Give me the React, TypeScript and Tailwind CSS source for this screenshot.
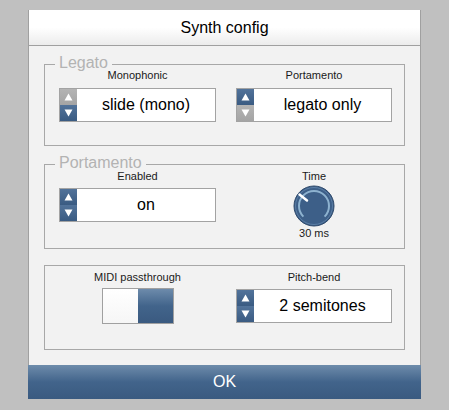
import type { ReactNode } from "react";

const font = { fontFamily: '"Liberation Sans", Arial, sans-serif' };

function Arrow({ dir, active }: { dir: "up" | "down"; active: boolean }) {
    return (
        <div
            className={
                "flex flex-1 items-center justify-center " +
                (active
                    ? "bg-gradient-to-b from-[#52739a] to-[#3a5b82]"
                    : "bg-gradient-to-b from-[#b4b4b4] to-[#a4a4a4]")
            }
        >
            <svg width="9" height="8" viewBox="0 0 9 8">
                {dir === "up" ? (
                    <polygon points="4.5,0.5 8.5,7.5 0.5,7.5" fill="#fff" />
                ) : (
                    <polygon points="0.5,0.5 8.5,0.5 4.5,7.5" fill="#fff" />
                )}
            </svg>
        </div>
    );
}

function Spinbox({ value, up, down }: { value: string; up: boolean; down: boolean }) {
    return (
        <div className="flex h-[34px] border border-[#a3a3a3] bg-white">
            <div className="flex w-[17px] flex-col">
                <Arrow dir="up" active={up} />
                <Arrow dir="down" active={down} />
            </div>
            <div className="flex flex-1 items-center justify-center text-[16px] text-black">{value}</div>
        </div>
    );
}

function Label({ children }: { children: ReactNode }) {
    return <div className="relative z-10 text-center text-[11px] leading-[13px] text-[#1a1a1a]">{children}</div>;
}

function Group({ legend, short, className, children }: { legend?: string; short?: boolean; className?: string; children: ReactNode }) {
    return (
        <div className={"relative mx-[15px] border border-[#a8a8a8] " + (short ? "h-[82px] " : "h-[85px] ") + (className ?? "")}>
            {legend && (
                <span className="absolute left-[10px] top-[-11px] bg-[#f2f2f2] px-[4px] text-[16px] leading-[18px] text-[#b3b3b3]">
                    {legend}
                </span>
            )}
            <div className="grid grid-cols-[157px_156px] gap-x-[20px] pl-[14px]">{children}</div>
        </div>
    );
}

function Knob() {
    return (
        <svg width="42" height="42" viewBox="0 0 42 42">
            <circle cx="21" cy="21" r="20" fill="#3d5f88" stroke="#2f4a6c" strokeWidth="1" />
            <circle cx="21" cy="21" r="18.5" fill="none" stroke="#5b7ea5" strokeWidth="1" />
            <path d="M 10.4 31.6 A 15 15 0 1 1 31.6 31.6" fill="none" stroke="#8db2cf" strokeWidth="2" />
            <line x1="14" y1="15.5" x2="6.5" y2="9.5" stroke="#fff" strokeWidth="2.5" strokeLinecap="round" />
        </svg>
    );
}

export default function App() {
    return (
        <div className="h-[410px] w-[449px] overflow-hidden bg-[#c0c0c0] pt-[10px]" style={font}>
            <div className="ml-[28px] w-[393px] border-x border-[#a0a0a0]">
                <div className="flex h-[36px] items-center justify-center border-b border-[#a0a0a0] bg-gradient-to-b from-white via-white to-[#ececec] text-[16px] text-black">
                    Synth config
                </div>
                <div className="h-[319px] bg-[#f2f2f2] pt-[18px]">
                    <Group legend="Legato" short>
                        <div className="pt-[4px]">
                            <Label>Monophonic</Label>
                            <div className="mt-[6px]">
                                <Spinbox value="slide (mono)" up={false} down={true} />
                            </div>
                        </div>
                        <div className="pt-[4px]">
                            <Label>Portamento</Label>
                            <div className="mt-[6px]">
                                <Spinbox value="legato only" up={true} down={false} />
                            </div>
                        </div>
                    </Group>
                    <Group legend="Portamento" className="mt-[18px]">
                        <div className="pt-[5px]">
                            <Label>Enabled</Label>
                            <div className="mt-[5px]">
                                <Spinbox value="on" up={true} down={true} />
                            </div>
                        </div>
                        <div className="flex flex-col items-center pt-[5px]">
                            <Label>Time</Label>
                            <div className="mt-[2px] h-[42px]">
                                <Knob />
                            </div>
                            <Label>30 ms</Label>
                        </div>
                    </Group>
                    <Group className="mt-[16px]">
                        <div className="flex flex-col items-center pt-[5px]">
                            <Label>MIDI passthrough</Label>
                            <div className="mt-[4px] flex h-[36px] w-[72px] border border-[#a0a0a0]">
                                <div className="flex-1 bg-gradient-to-b from-white to-[#f6f6f6]" />
                                <div className="flex-1 bg-gradient-to-b from-[#6d8bab] via-[#42648b] to-[#3a5a80]" />
                            </div>
                        </div>
                        <div className="pt-[5px]">
                            <Label>Pitch-bend</Label>
                            <div className="mt-[5px]">
                                <Spinbox value="2 semitones" up={true} down={true} />
                            </div>
                        </div>
                    </Group>
                </div>
            </div>
            <div className="ml-[28px] flex h-[34px] w-[393px] items-center justify-center bg-gradient-to-b from-[#6e8cab] via-[#42648b] to-[#3a5a80] text-[16px] text-white">
                OK
            </div>
        </div>
    );
}
